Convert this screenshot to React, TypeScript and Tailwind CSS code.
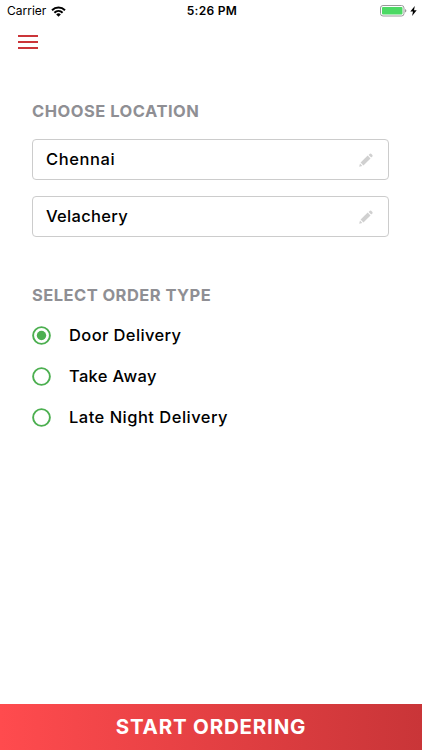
import { useState } from "react";

const locations = [
  { name: "Chennai", spacing: "tracking-[0.6px]" },
  { name: "Velachery", spacing: "tracking-[0.3px]" },
];

const orderTypes = [
  { label: "Door Delivery", spacing: "tracking-[0.38px]" },
  { label: "Take Away", spacing: "tracking-[0.34px]" },
  { label: "Late Night Delivery", spacing: "tracking-[0.48px]" },
];

function PencilIcon() {
  return (
    <svg width="14" height="14" viewBox="0 0 14 14" fill="#d0d0d0">
      <path d="M0.2 13.7 L1 10.6 L3.3 12.9 Z" />
      <path d="M1.6 9.6 L8.7 2.6 L11.5 5.4 L4.4 12.4 Z" />
      <path d="M9.6 1.9 L10.9 0.7 Q11.5 0.2 12.1 0.7 L13.4 2 Q13.9 2.6 13.4 3.2 L12.2 4.5 Z" />
    </svg>
  );
}

function StatusBar() {
  return (
    <div className="h-[22px] flex items-center justify-between pl-[7px] pr-[5px] font-['Inter',sans-serif] text-black">
      <div className="flex flex-1 items-center gap-[5px]">
        <span className="text-[12px]">Carrier</span>
        <svg width="15" height="11" viewBox="0 0 15 11" fill="none" stroke="#000" strokeWidth="2">
          <path d="M1 4.2 A9.4 9.4 0 0 1 14 4.2" />
          <path d="M3.4 6.7 A6 6 0 0 1 11.6 6.7" />
          <path d="M7.5 10.8 L5.2 8.4 A3.3 3.3 0 0 1 9.8 8.4 Z" fill="#000" stroke="none" />
        </svg>
      </div>
      <span className="text-[12px] font-semibold tracking-[0.3px]">5:26 PM</span>
      <div className="flex flex-1 items-center justify-end gap-[3px]">
        <svg width="27" height="12" viewBox="0 0 27 12">
          <rect x="0.5" y="0.5" width="23.5" height="10.5" rx="2.5" fill="#fff" stroke="#999" />
          <rect x="2" y="2" width="20.5" height="7.5" rx="1" fill="#4cd964" />
          <path d="M25 4 Q26.4 4.5 26.4 5.8 Q26.4 7.1 25 7.6 Z" fill="#999" />
        </svg>
        <svg width="7" height="10" viewBox="0 0 7 10">
          <path d="M4.8 0 L0.3 5.6 H3 L2.1 10 L6.7 4.2 H4 Z" fill="#000" />
        </svg>
      </div>
    </div>
  );
}

export default function App() {
  const [selected, setSelected] = useState("Door Delivery");

  return (
    <div className="flex h-screen flex-col bg-white font-['Inter',sans-serif] text-black">
      <StatusBar />

      {/* Header */}
      <header className="pt-[13px] pl-[18px]">
        <button className="flex w-[20px] flex-col gap-[4px]" aria-label="Menu">
          <span className="h-[2px] w-full bg-[#cb3539]" />
          <span className="h-[2px] w-full bg-[#cb3539]" />
          <span className="h-[2px] w-full bg-[#cb3539]" />
        </button>
      </header>

      <main className="flex-1 pt-[52px] pr-[33px] pl-8">
        {/* Location */}
        <h2 className="text-[16.5px] leading-5 font-bold tracking-[0.5px] whitespace-nowrap text-[#8f8f94]">
          CHOOSE LOCATION
        </h2>
        <div className="mt-[18px] flex flex-col gap-4">
          {locations.map(({ name, spacing }) => (
            <div
              key={name}
              className="flex h-[41px] items-center justify-between rounded border border-[#cccccc] pr-[15px] pl-[13px]"
            >
              <span className={`pb-px text-[16.5px] font-[450] ${spacing}`}>{name}</span>
              <PencilIcon />
            </div>
          ))}
        </div>

        {/* Order type */}
        <h2 className="mt-[48px] text-[16.5px] leading-5 font-bold tracking-[0.45px] whitespace-nowrap text-[#8f8f94]">
          SELECT ORDER TYPE
        </h2>
        <div className="mt-[10px] flex flex-col">
          {orderTypes.map(({ label, spacing }) => (
            <button
              key={label}
              onClick={() => setSelected(label)}
              className="flex h-[41px] items-center gap-[18px] text-left"
            >
              <svg width="19" height="19" viewBox="0 0 19 19">
                <circle cx="9.5" cy="9.5" r="8.4" fill="none" stroke="#4caf50" strokeWidth="1.9" />
                {selected === label && <circle cx="9.5" cy="9.5" r="4.7" fill="#4caf50" />}
              </svg>
              <span className={`pb-px text-[16.5px] font-[450] ${spacing}`}>{label}</span>
            </button>
          ))}
        </div>
      </main>

      <button className="h-[46px] w-full bg-linear-to-r from-[#ff4b4e] to-[#c93538] text-[20.5px] font-bold tracking-[0.8px] text-white">
        START ORDERING
      </button>
    </div>
  );
}
